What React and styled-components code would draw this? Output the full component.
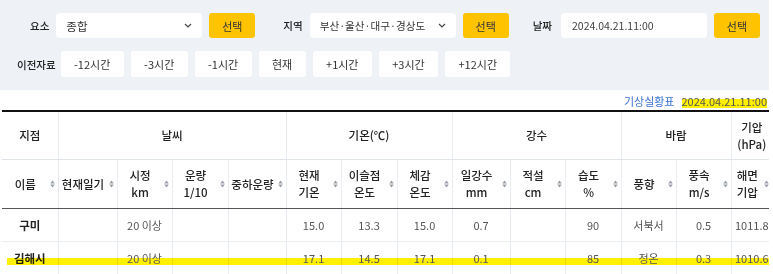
import React from "react";
import styled, { createGlobalStyle } from "styled-components";

const Global = createGlobalStyle`
  html, body { margin: 0; padding: 0; background: #fff; }
  body { font-family: "Noto Sans CJK KR", "Noto Sans", sans-serif; color: #333; }
`;

const Page = styled.div`
  width: 769px;
  overflow: hidden;
`;

const Panel = styled.div`
  background: #eef1f6;
  height: 90px;
  box-sizing: border-box;
  padding-top: 13px;
  display: flex;
  flex-direction: column;
  gap: 13px;
`;

const Row = styled.div`
  display: flex;
  align-items: center;
  padding-left: ${(p) => p.$pl}px;
`;

const Label = styled.span`
  font-size: 10.5px;
  font-weight: 500;
  color: #222;
  margin-left: ${(p) => p.$ml || 0}px;
  margin-right: ${(p) => p.$mr || 7}px;
  white-space: nowrap;
`;

const SelectBox = styled.div`
  width: 146px;
  height: 25px;
  box-sizing: border-box;
  background: #fff;
  border-radius: 4px;
  display: flex;
  align-items: center;
  justify-content: space-between;
  padding: 0 10px 0 10px;
  font-size: ${(p) => p.$fs || 11.5}px;
  color: #333;
  white-space: nowrap;
`;

const DateBox = styled(SelectBox)`
  font-size: 10.5px;
  color: #444;
  padding-left: 11px;
`;

const YellowButton = styled.button`
  width: 46px;
  height: 25px;
  margin-left: 7px;
  border: 0;
  border-radius: 3px;
  background: #ffc300;
  font-family: inherit;
  font-size: 11px;
  color: #333;
  padding: 0;
`;

const TimeButtons = styled.div`
  display: flex;
  gap: 7px;
`;

const TimeButton = styled.button`
  height: 26px;
  padding: 0 13.4px;
  border: 0;
  border-radius: 3px;
  background: #fff;
  font-family: inherit;
  font-size: 11px;
  color: #333;
`;

const Caption = styled.div`
  height: 20px;
  display: flex;
  justify-content: flex-end;
  align-items: center;
  gap: 7px;
  padding-right: 2px;
  padding-top: 1px;
  box-sizing: border-box;
`;

const CaptionTitle = styled.span`
  font-size: 11px;
  color: #3b73d6;
`;

const Marked = styled.span`
  font-size: 11px;
  color: #555;
  background: linear-gradient(
    to bottom,
    transparent 35%,
    #fff000 35%,
    #fff000 92%,
    transparent 92%
  );
`;

const Table = styled.table`
  margin-left: 2px;
  width: 770px;
  table-layout: fixed;
  border-collapse: collapse;
  border-top: 2px solid #111;
  font-size: 11px;
`;

const HeadCell = styled.th`
  position: relative;
  height: ${(p) => p.$h}px;
  padding: 0 ${(p) => (p.$sort ? 9 : 0)}px 0 0;
  font-weight: 500;
  font-size: 11.5px;
  line-height: 17px;
  color: #222;
  text-align: center;
  border-left: 1px solid #e8ebf2;
  border-bottom: 1px solid ${(p) => p.$bb || "#dfe3ea"};
  &:first-child { border-left: 0; }
`;

const SortIcon = styled.svg`
  position: absolute;
  right: 3px;
  top: 50%;
  margin-top: -4px;
  width: 5px;
  height: 8px;
`;

const Cell = styled.td`
  position: relative;
  height: 32px;
  padding: 0;
  text-align: center;
  color: #555;
  font-size: 11px;
  white-space: nowrap;
  border-left: 1px solid #e8ebf2;
  border-bottom: 1px solid #eceff4;
  &:first-child { border-left: 0; }
`;

const NameCell = styled(Cell)`
  color: #222;
  font-weight: 700;
  font-size: 11.5px;
`;

const RowMark = styled.span`
  position: absolute;
  left: 5px;
  top: 16px;
  width: 800px;
  height: 7px;
  background: #fff000;
  mix-blend-mode: multiply;
  pointer-events: none;
`;

const Chevron = () => (
  <svg width="8" height="5" viewBox="0 0 8 5">
    <path d="M1 1l3 3 3-3" fill="none" stroke="#444" strokeWidth="1.2" />
  </svg>
);

const Sort = () => (
  <SortIcon viewBox="0 0 5 8">
    <path d="M2.5 0.5L4.8 3.6H0.2z M2.5 7.5L4.8 4.4H0.2z" fill="#9aa0a8" />
  </SortIcon>
);

const widths = [56, 59, 55, 56, 58, 55, 56, 55, 58, 55, 56, 55, 55, 41];

const subHeads = [
  ["이름"],
  ["현재일기"],
  ["시정", "km"],
  ["운량", "1/10"],
  ["중하운량"],
  ["현재", "기온"],
  ["이슬점", "온도"],
  ["체감", "온도"],
  ["일강수", "mm"],
  ["적설", "cm"],
  ["습도", "%"],
  ["풍향"],
  ["풍속", "m/s"],
  ["해면", "기압"],
];

const rows = [
  { name: "구미", vals: ["", "20 이상", "", "", "15.0", "13.3", "15.0", "0.7", "", "90", "서북서", "0.5", "1011.8"] },
  { name: "김해시", mark: true, vals: ["", "20 이상", "", "", "17.1", "14.5", "17.1", "0.1", "", "85", "정온", "0.3", "1010.6"] },
];

export default function App() {
  return (
    <Page>
      <Global />
      <Panel>
        <Row $pl={30}>
          <Label>요소</Label>
          <SelectBox>
            <span>종합</span>
            <Chevron />
          </SelectBox>
          <YellowButton>선택</YellowButton>
          <Label $ml={28}>지역</Label>
          <SelectBox $fs={10.6}>
            <span>부산·울산·대구·경상도</span>
            <Chevron />
          </SelectBox>
          <YellowButton>선택</YellowButton>
          <Label $ml={24} $mr={9}>날짜</Label>
          <DateBox>2024.04.21.11:00</DateBox>
          <YellowButton>선택</YellowButton>
        </Row>
        <Row $pl={17}>
          <Label $mr={5}>이전자료</Label>
          <TimeButtons>
            <TimeButton>-12시간</TimeButton>
            <TimeButton>-3시간</TimeButton>
            <TimeButton>-1시간</TimeButton>
            <TimeButton>현재</TimeButton>
            <TimeButton>+1시간</TimeButton>
            <TimeButton>+3시간</TimeButton>
            <TimeButton>+12시간</TimeButton>
          </TimeButtons>
        </Row>
      </Panel>
      <Caption>
        <CaptionTitle>기상실황표</CaptionTitle>
        <Marked>2024.04.21.11:00</Marked>
      </Caption>
      <Table>
        <colgroup>
          {widths.map((w, i) => (
            <col key={i} style={{ width: w }} />
          ))}
        </colgroup>
        <thead>
          <tr>
            <HeadCell $h={47}>지점</HeadCell>
            <HeadCell $h={47} colSpan={4}>날씨</HeadCell>
            <HeadCell $h={47} colSpan={3}>기온(℃)</HeadCell>
            <HeadCell $h={47} colSpan={3}>강수</HeadCell>
            <HeadCell $h={47} colSpan={2}>바람</HeadCell>
            <HeadCell $h={47}>
              기압
              <br />
              (hPa)
            </HeadCell>
          </tr>
          <tr>
            {subHeads.map((h, i) => (
              <HeadCell key={i} $h={48} $sort $bb="#555">
                {h[0]}
                {h[1] && (
                  <>
                    <br />
                    {h[1]}
                  </>
                )}
                <Sort />
              </HeadCell>
            ))}
          </tr>
        </thead>
        <tbody>
          {rows.map((r) => (
            <tr key={r.name}>
              <NameCell>
                {r.mark && <RowMark />}
                {r.name}
              </NameCell>
              {r.vals.map((v, i) => (
                <Cell key={i}>{v}</Cell>
              ))}
            </tr>
          ))}
        </tbody>
      </Table>
    </Page>
  );
}
